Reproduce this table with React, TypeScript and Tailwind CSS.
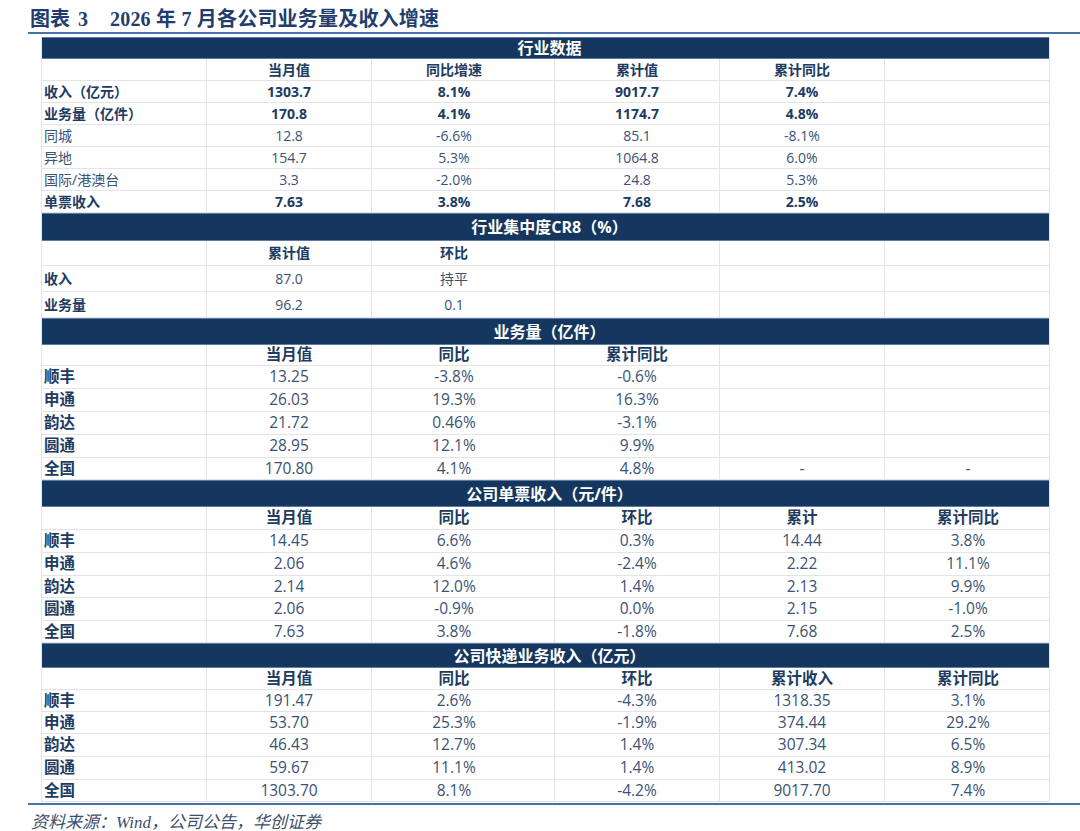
import React from "react";

type Row = { cells: string[]; bold?: boolean; labelBold?: boolean; h: string };
type Section = { title: string; barH: string; big: boolean; header: string[]; headerH: string; rows: Row[] };

const sections: Section[] = [
  {
    title: "行业数据",
    barH: "h-[22px]",
    big: false,
    header: ["", "当月值", "同比增速", "累计值", "累计同比", ""],
    headerH: "h-[22px]",
    rows: [
      { cells: ["收入（亿元）", "1303.7", "8.1%", "9017.7", "7.4%", ""], bold: true, h: "h-[22px]" },
      { cells: ["业务量（亿件）", "170.8", "4.1%", "1174.7", "4.8%", ""], bold: true, h: "h-[22px]" },
      { cells: ["同城", "12.8", "-6.6%", "85.1", "-8.1%", ""], h: "h-[22px]" },
      { cells: ["异地", "154.7", "5.3%", "1064.8", "6.0%", ""], h: "h-[22px]" },
      { cells: ["国际/港澳台", "3.3", "-2.0%", "24.8", "5.3%", ""], h: "h-[22px]" },
      { cells: ["单票收入", "7.63", "3.8%", "7.68", "2.5%", ""], bold: true, h: "h-[22px]" },
    ],
  },
  {
    title: "行业集中度CR8（%）",
    barH: "h-[28px]",
    big: false,
    header: ["", "累计值", "环比", "", "", ""],
    headerH: "h-[25px]",
    rows: [
      { cells: ["收入", "87.0", "持平", "", "", ""], labelBold: true, h: "h-[26px]" },
      { cells: ["业务量", "96.2", "0.1", "", "", ""], labelBold: true, h: "h-[26px]" },
    ],
  },
  {
    title: "业务量（亿件）",
    barH: "h-[27px]",
    big: true,
    header: ["", "当月值", "同比", "累计同比", "", ""],
    headerH: "h-[21px]",
    rows: [
      { cells: ["顺丰", "13.25", "-3.8%", "-0.6%", "", ""], labelBold: true, h: "h-[23px]" },
      { cells: ["申通", "26.03", "19.3%", "16.3%", "", ""], labelBold: true, h: "h-[23px]" },
      { cells: ["韵达", "21.72", "0.46%", "-3.1%", "", ""], labelBold: true, h: "h-[23px]" },
      { cells: ["圆通", "28.95", "12.1%", "9.9%", "", ""], labelBold: true, h: "h-[23px]" },
      { cells: ["全国", "170.80", "4.1%", "4.8%", "-", "-"], labelBold: true, h: "h-[22px]" },
    ],
  },
  {
    title: "公司单票收入（元/件）",
    barH: "h-[27px]",
    big: true,
    header: ["", "当月值", "同比", "环比", "累计", "累计同比"],
    headerH: "h-[23px]",
    rows: [
      { cells: ["顺丰", "14.45", "6.6%", "0.3%", "14.44", "3.8%"], labelBold: true, h: "h-[23px]" },
      { cells: ["申通", "2.06", "4.6%", "-2.4%", "2.22", "11.1%"], labelBold: true, h: "h-[23px]" },
      { cells: ["韵达", "2.14", "12.0%", "1.4%", "2.13", "9.9%"], labelBold: true, h: "h-[22px]" },
      { cells: ["圆通", "2.06", "-0.9%", "0.0%", "2.15", "-1.0%"], labelBold: true, h: "h-[23px]" },
      { cells: ["全国", "7.63", "3.8%", "-1.8%", "7.68", "2.5%"], labelBold: true, h: "h-[22px]" },
    ],
  },
  {
    title: "公司快递业务收入（亿元）",
    barH: "h-[25px]",
    big: true,
    header: ["", "当月值", "同比", "环比", "累计收入", "累计同比"],
    headerH: "h-[22px]",
    rows: [
      { cells: ["顺丰", "191.47", "2.6%", "-4.3%", "1318.35", "3.1%"], labelBold: true, h: "h-[22px]" },
      { cells: ["申通", "53.70", "25.3%", "-1.9%", "374.44", "29.2%"], labelBold: true, h: "h-[22px]" },
      { cells: ["韵达", "46.43", "12.7%", "1.4%", "307.34", "6.5%"], labelBold: true, h: "h-[23px]" },
      { cells: ["圆通", "59.67", "11.1%", "1.4%", "413.02", "8.9%"], labelBold: true, h: "h-[23px]" },
      { cells: ["全国", "1303.70", "8.1%", "-4.2%", "9017.70", "7.4%"], labelBold: true, h: "h-[22px]" },
    ],
  },
];

const font = { fontFamily: '"Open Sans","Noto Sans CJK SC",sans-serif' };
const serif = { fontFamily: '"Liberation Serif","Noto Sans CJK SC",serif' };

function Cell({ text, idx, bold, big }: { text: string; idx: number; bold: boolean; big: boolean }) {
  const size = big ? "text-[15.5px]" : "text-[14px]";
  const weight = bold ? "font-bold" : "font-normal";
  const color = bold ? "text-[#203b61]" : "text-[#3a5274]";
  const align = idx === 0 ? "justify-start pl-[2px]" : idx === 2 ? "justify-center pr-[18px]" : "justify-center";
  const last = idx === 5 ? "" : "border-r border-[#e4e4e4]";
  return (
    <div className={`flex items-center ${align} ${last} ${size} ${weight} ${color} leading-none whitespace-nowrap`}>
      {text}
    </div>
  );
}

function GridRow({ cells, h, big, bold, labelBold, header }: { cells: string[]; h: string; big: boolean; bold?: boolean; labelBold?: boolean; header?: boolean }) {
  return (
    <div className={`grid grid-cols-[165px_165px_183px_165px_165px_166px] ${h} border-b border-[#e4e4e4]`}>
      {cells.map((c, i) => (
        <Cell key={i} text={c} idx={i} big={big} bold={!!header || !!bold || (i === 0 && !!labelBold)} />
      ))}
    </div>
  );
}

export default function App() {
  return (
    <div className="w-[1080px] h-[831px] bg-white overflow-hidden" style={font}>
      <div className="h-[32px] flex items-center pl-[30px] pt-[5px]">
        <div className="flex items-center text-[20px] font-bold text-[#1f3d6e] leading-none whitespace-nowrap" style={serif}>
          <span>图表</span>
          <span className="ml-[8px]">3</span>
          <span className="ml-[22px] tracking-[0.2px]">2026 年 7 月各公司业务量及收入增速</span>
        </div>
      </div>
      <div className="ml-[28px] h-[2px] bg-[#4a72a8]" />
      <div className="h-[3px]" />
      <div className="ml-[41px] w-[1009px] border-x border-[#e4e4e4]">
        {sections.map((s, si) => (
          <div key={si}>
            <div className={`${s.barH} bg-[#15365e] border-y border-[#5d7ba3] flex items-center justify-center text-white font-bold text-[16px] leading-none`}>
              <span className="pl-[8px]">{s.title}</span>
            </div>
            <GridRow cells={s.header} h={s.headerH} big={s.big} header />
            {s.rows.map((r, ri) => (
              <GridRow key={ri} cells={r.cells} h={r.h} big={s.big} bold={r.bold} labelBold={r.labelBold} />
            ))}
          </div>
        ))}
      </div>
      <div className="h-[1px]" />
      <div className="ml-[28px] h-[2px] bg-[#4a72a8]" />
      <div className="pl-[31px] pt-[9px] text-[17px] italic text-[#3d4f6e] leading-none" style={serif}>
        资料来源：Wind，公司公告，华创证券
      </div>
    </div>
  );
}
